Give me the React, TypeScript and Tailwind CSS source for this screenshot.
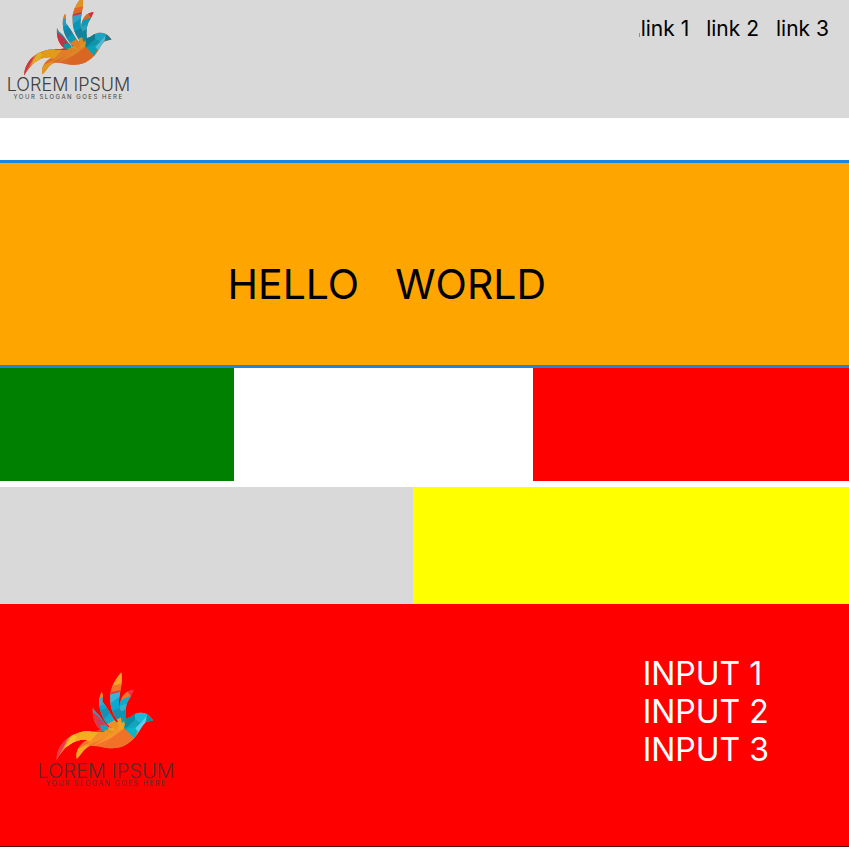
import { useId } from "react";

function Bird({ className }: { className: string }) {
  const id = useId();
  return (
    <svg viewBox="60 -12 282 243" className={className} aria-hidden="true">
      <defs>
        <clipPath id={id}>
          <path d="M72 227C73 190 98 158 145 149C165 147 185 150 200 142L222 134L246 118C262 114 272 112 282 103C298 94 318 98 326 108L335 119C326 121 318 120 312 126C300 138 298 152 284 166C262 190 240 196 215 194C195 193 178 186 162 189C145 195 140 213 127 223C123 205 132 182 157 172C125 168 96 184 72 227Z" />
          <path d="M171 84C168 112 178 137 196 146L214 138C200 124 192 108 182 99C175 93 173 90 171 84Z" />
          <path d="M195 41C183 62 185 104 218 138L236 126C222 110 214 88 199 71C194 64 201 54 195 41Z" />
          <path d="M248 -12C224 16 216 40 218 62C218 90 230 112 247 132L250 114C245 96 240 76 242 60C246 34 252 16 248 -12Z" />
          <path d="M281 36C258 38 245 56 244 80C244 98 248 112 256 124L260 112C259 92 260 78 266 66C273 56 276 48 281 36Z" />
        </clipPath>
      </defs>
      <g clipPath={`url(#${id})`}>
        <path d="M60-12H342V231H60Z" fill="#f5742b" />
        <path d="M60 231V140H110L100 172L84 231Z" fill="#e63b4e" />
        <path d="M78 216L104 168L142 145L132 175L100 190Z" fill="#f58b27" />
        <path d="M110 160L142 146L190 148L176 168L140 178L100 190Z" fill="#f9a51f" />
        <path d="M116 156L132 166L126 182L94 192Z" fill="#fbc12b" />
        <path d="M120 230V200L162 180L148 230Z" fill="#f7a823" />
        <path d="M142 147L200 140L190 166L168 176L120 174Z" fill="#f8ac20" />
        <path d="M190 146L250 126L222 158L150 190Z" fill="#f58e29" />
        <path d="M200 140L250 108L258 140L230 148Z" fill="#f6a126" />
        <path d="M230 148L258 140L222 166L168 190Z" fill="#f6952b" />
        <path d="M258 140L286 166L240 200L196 196L222 166Z" fill="#f27128" />
        <path d="M246 106L284 94L288 138L258 144Z" fill="#0c8ba4" />
        <path d="M258 142L286 116L304 124L286 140Z" fill="#12a4b9" />
        <path d="M258 142L296 133L284 168Z" fill="#0bb5c8" />
        <path d="M286 116L284 94L312 92L322 110L302 126Z" fill="#20b6d8" />
        <path d="M302 124L318 106L312 128L294 150L286 140Z" fill="#5acdf1" />
        <path d="M318 102L340 120L314 126Z" fill="#138da5" />
        <path d="M165 78H188L195 113L173 100Z" fill="#16a9c9" />
        <path d="M165 92L198 116L202 150H165Z" fill="#e5344a" />
        <path d="M174 111L195 117L213 139L198 148Z" fill="#c83e55" />
        <path d="M190 132L215 130L212 144L195 148Z" fill="#12a5bd" />
        <path d="M182 35H205V56L184 62Z" fill="#f58b29" />
        <path d="M182 60L202 53L208 82L184 82Z" fill="#2aaed7" />
        <path d="M184 80L206 75L228 113L212 136L184 106Z" fill="#08a5d0" />
        <path d="M190 92L209 85L218 97L200 114Z" fill="#198fb4" />
        <path d="M203 114L223 103L240 126L218 140Z" fill="#10abc8" />
        <path d="M208 130L232 116L248 126L236 146Z" fill="#f38e27" />
        <path d="M216-12H255L247 27L216 30Z" fill="#f7a329" />
        <path d="M214 27L250 19L243 42L216 47Z" fill="#f5742b" />
        <path d="M215 44L243 37L244 43L217 50Z" fill="#dd3b3d" />
        <path d="M214 49L246 41L243 65L216 78Z" fill="#37b3dd" />
        <path d="M214 76L243 54L246 91L226 104Z" fill="#08a8d0" />
        <path d="M222 94L245 85L252 116L237 122Z" fill="#168eaf" />
        <path d="M236 116L254 107L258 134H240Z" fill="#f79a26" />
        <path d="M262 30H288L274 54L258 48Z" fill="#e9334c" />
        <path d="M246 50L263 38L274 54L256 66L246 62Z" fill="#f27729" />
        <path d="M244 64L274 52L264 80H243Z" fill="#0eabcf" />
        <path d="M243 80L264 73L262 94L249 98Z" fill="#30b3cc" />
        <path d="M243 96L262 88L262 115L250 126Z" fill="#0b96b0" />
      </g>
    </svg>
  );
}

export default function App() {
  return (
    <div className="bg-white font-['Inter',sans-serif] text-black">
      <header className="flex h-[118px] items-start justify-between overflow-hidden bg-[#d9d9d9] pr-5">
        <div className="-mt-1 w-[137px] text-center whitespace-nowrap text-[#404040]">
          <Bird className="ml-5 h-[81px] w-[94px] brightness-90" />
          <p className="text-lg leading-4 font-light">LOREM IPSUM</p>
          <p className="text-[6px] leading-[7px] tracking-[0.25em]">YOUR SLOGAN GOES HERE</p>
        </div>
        <nav className="flex gap-[17px] pt-[17px] text-[21px] leading-6">
          <a href="#link-1" className="flex items-end">
            <span className="mr-px mb-1 h-1 w-px bg-[#909090]" />
            link 1
          </a>
          <a href="#link-2">link 2</a>
          <a href="#link-3">link 3</a>
        </nav>
      </header>

      <main className="pt-[42px]">
        <section className="h-52 border-y-3 border-[#1c86da] bg-[#ffa500] pt-[95px] pl-[26.8%]">
          <h1 className="flex gap-9 text-[41px] leading-[52px]">
            <span>HELLO</span>
            <span>WORLD</span>
          </h1>
        </section>
        <section className="grid h-[113px] grid-cols-[234fr_299fr_316fr]">
          <div className="bg-[#008000]" />
          <div className="bg-white" />
          <div className="bg-[#ff0000]" />
        </section>
        <section className="mt-1.5 grid h-[117px] grid-cols-[413fr_436fr]">
          <div className="bg-[#d9d9d9]" />
          <div className="bg-[#ffff00]" />
        </section>
      </main>

      <footer className="flex h-[243px] items-start justify-between border-b border-[#600000] bg-[#ff0000] pr-20 pl-8">
        <div className="w-[148px] pt-[68px] text-center whitespace-nowrap text-[#5c2a2a]">
          <Bird className="ml-5 h-[90px] w-[104px]" />
          <p className="text-xl leading-[18px] font-light">LOREM IPSUM</p>
          <p className="text-[7px] leading-2 tracking-[0.2em]">YOUR SLOGAN GOES HERE</p>
        </div>
        <ul className="pt-[51px] text-[32px] leading-[38px] text-white">
          <li>INPUT 1</li>
          <li>INPUT 2</li>
          <li>INPUT 3</li>
        </ul>
      </footer>
    </div>
  );
}
